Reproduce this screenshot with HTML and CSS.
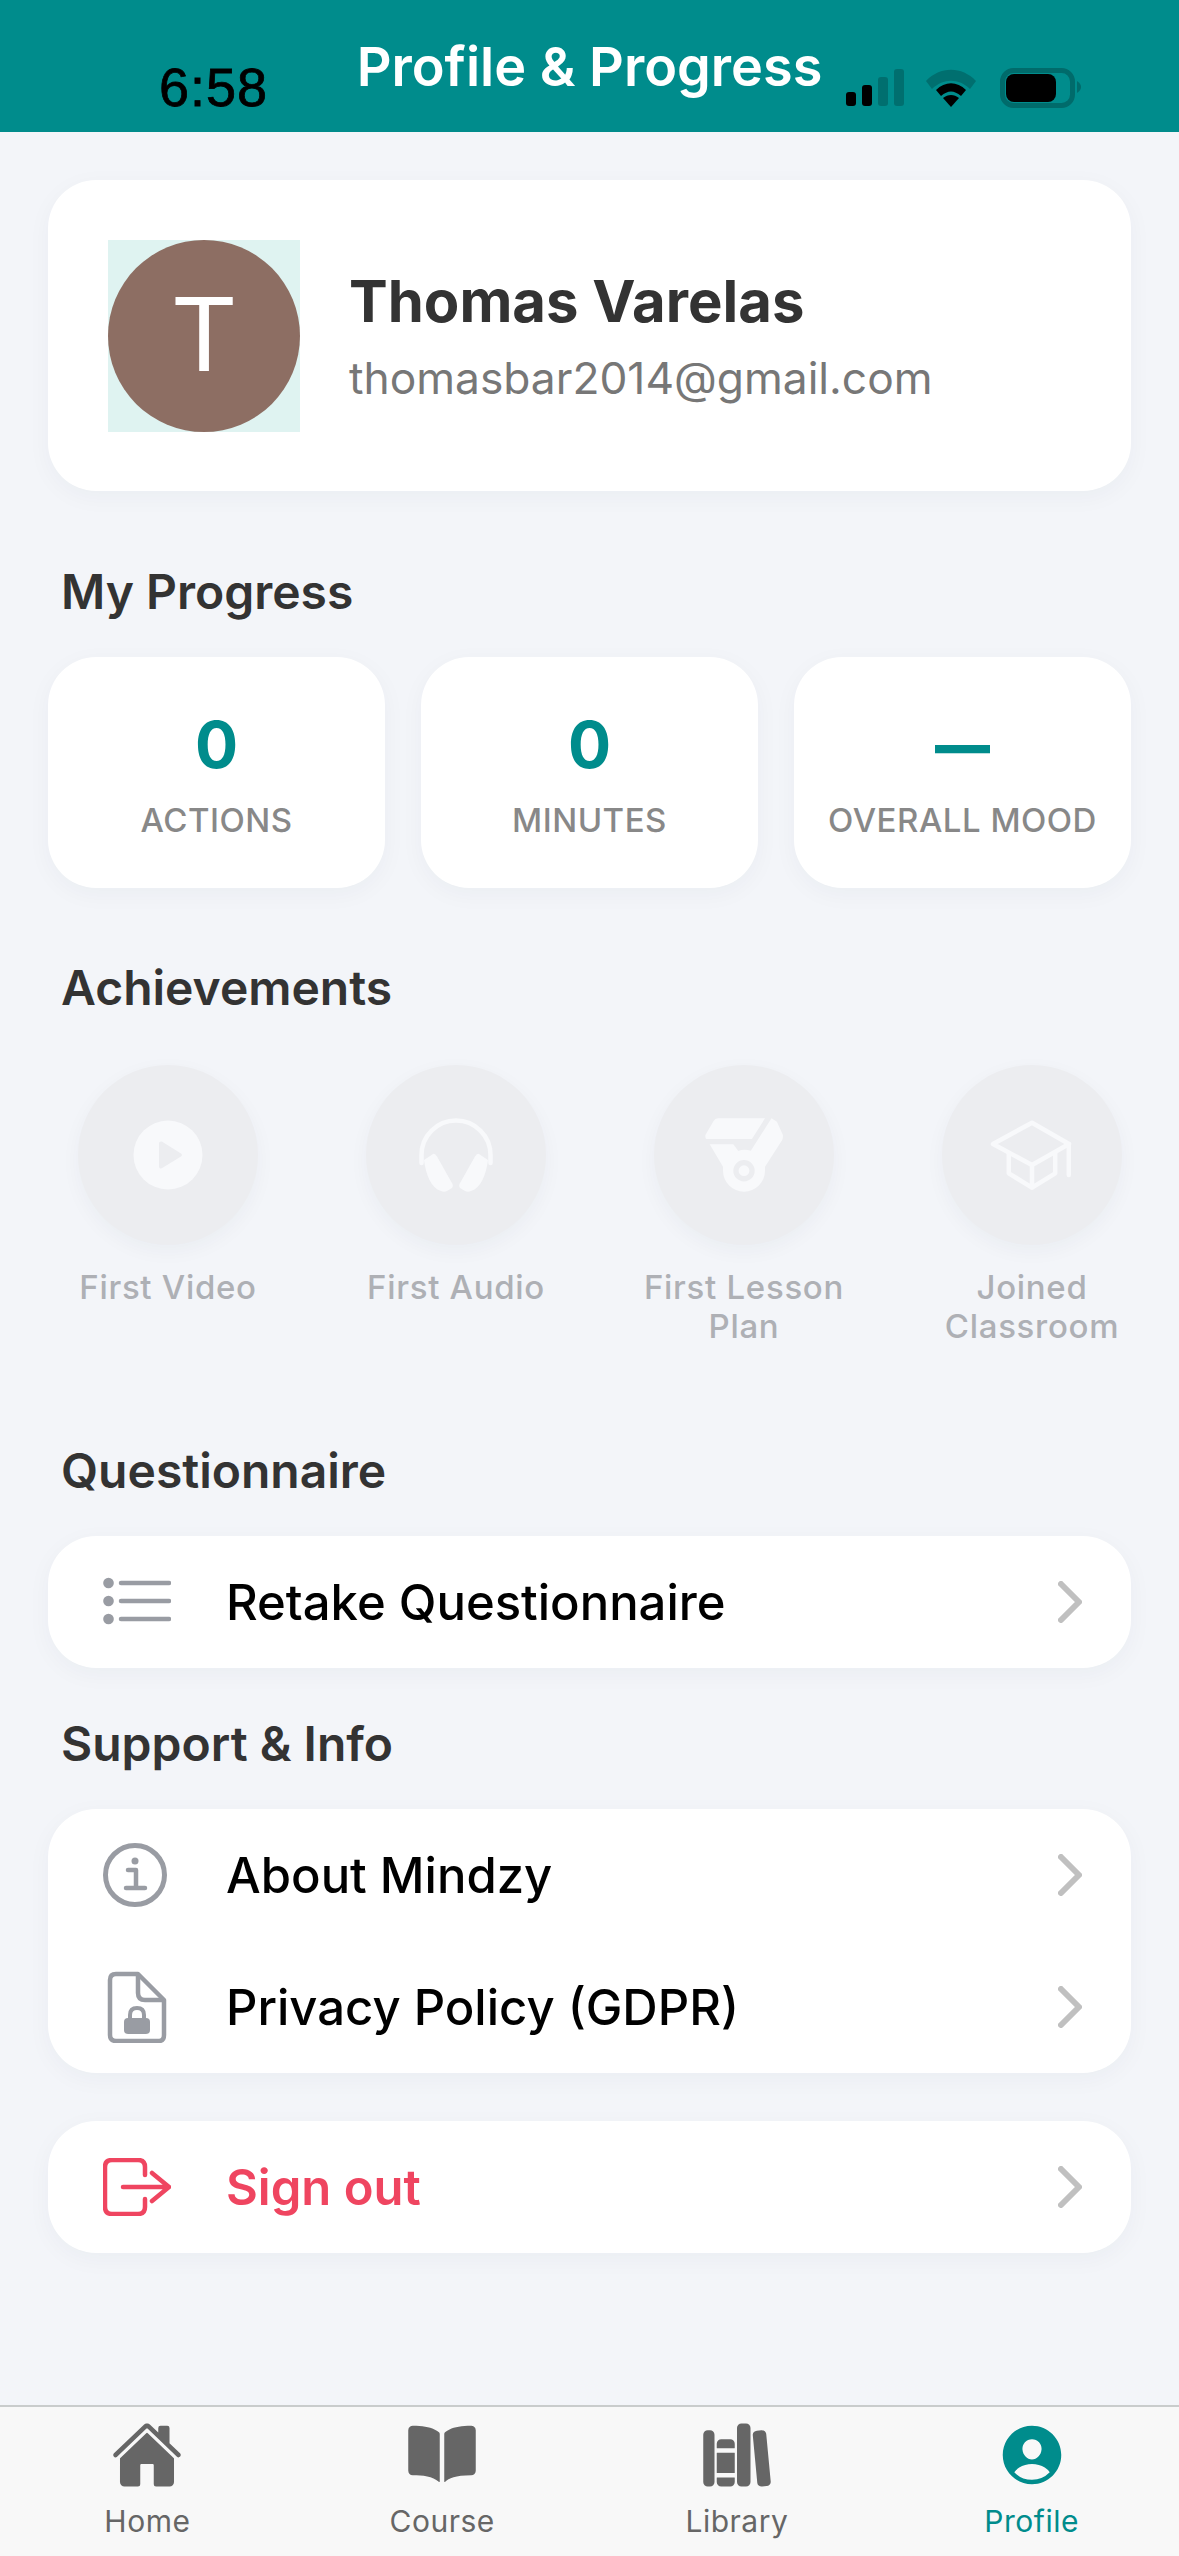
FILE: index.html
```html
<!DOCTYPE html>
<html lang="en">
<head>
    <meta charset="UTF-8">
    <meta name="viewport" content="width=device-width, initial-scale=1.0">
    <title>Profile &amp; Progress</title>
    <link rel="stylesheet" href="styles.css">
</head>
<body>
    <div class="app">
        <header class="top-bar">
            <h1 class="top-title">Profile &amp; Progress</h1>
            <span class="status-time">6:58</span>
            <svg class="status-icons" width="236" height="40" viewBox="846 68 236 40">
                <rect x="846" y="92" width="10" height="14" rx="3"/>
                <rect x="862" y="85" width="10" height="21" rx="3"/>
                <rect x="878" y="77" width="10" height="29" rx="3" fill="#006f6f"/>
                <rect x="894" y="69" width="10" height="37" rx="3" fill="#006f6f"/>
                <path d="M926 81C940 66 962 66 976 81L970 89C959 78 943 78 932 89Z" fill="#006f6f"/>
                <path d="M936 90C945 81 957 81 966 90L961 96C954 90 948 90 941 96Z"/>
                <path d="M943 98C948 94 954 94 959 98L951 107Z"/>
                <rect x="1002.5" y="70.5" width="70" height="35" rx="11" fill="none" stroke="#006b6b" stroke-width="5"/>
                <rect x="1006" y="74" width="50" height="28" rx="8"/>
                <path d="M1077 81C1080 83 1081 85 1081 87C1081 89 1080 91 1077 93Z" fill="#006b6b"/>
            </svg>
        </header>

        <main class="content">
            <section class="card profile-card">
                <div class="avatar-box"><div class="avatar">T</div></div>
                <div class="profile-info">
                    <div class="profile-name">Thomas Varelas</div>
                    <div class="profile-email">thomasbar2014@gmail.com</div>
                </div>
            </section>

            <h2 class="section-title progress-title">My Progress</h2>
            <div class="stats">
                <div class="card stat">
                    <div class="stat-value">0</div>
                    <div class="stat-label">Actions</div>
                </div>
                <div class="card stat">
                    <div class="stat-value">0</div>
                    <div class="stat-label">Minutes</div>
                </div>
                <div class="card stat">
                    <div class="stat-value stat-dash">—</div>
                    <div class="stat-label">Overall Mood</div>
                </div>
            </div>

            <h2 class="section-title achievements-title">Achievements</h2>
            <div class="badges">
                <div class="badge">
                    <div class="badge-circle">
                        <svg width="84" height="84" viewBox="0 0 84 84">
                            <path fill-rule="evenodd" d="M42 7.5a34.5 34.5 0 1 0 0 69a34.5 34.5 0 0 0 0-69zM33 30.500c0-1.800 1.800-2.600 3.200-1.700l18.800 11.800c1.300.8 1.300 2.200 0 3L36.200 55.100c-1.400.9-3.200.1-3.200-1.700z"/>
                        </svg>
                    </div>
                    <div class="badge-label">First Video</div>
                </div>
                <div class="badge">
                    <div class="badge-circle">
                        <svg width="84" height="84" viewBox="0 0 84 84">
                            <path class="line" d="M7.500 50V42a34.500 34.500 0 0 1 69 0V50"/>
                            <path d="M10 47L19 41Q21 40 23 43.500L38.500 71Q39.500 73 38 75L33 78Q30 79.500 27 78C17 75 12 62 10 47Z"/>
                            <path d="M74 47L65 41Q63 40 61 43.500L45.500 71Q44.500 73 46 75L51 78Q54 79.500 57 78C67 75 72 62 74 47Z"/>
                        </svg>
                    </div>
                    <div class="badge-label">First Audio</div>
                </div>
                <div class="badge">
                    <div class="badge-circle">
                        <svg width="84" height="84" viewBox="0 0 84 84">
                            <path d="M15.900 5.300H63L49.900 26H5.200Q3 26 3.400 22L11.600 8Q13 5.300 15.900 5.300Z"/>
                            <path fill-rule="evenodd" d="M7.700 31.300H31.300L36.300 38Q42 35.500 48.800 37.700L69.500 5.300L74.900 8.700L80.900 22Q81.200 25 80.200 27L63 53.700V57.700A21 21 0 0 1 21 57.700V53.700ZM42 47A10.700 10.700 0 1 0 42 68.400A10.700 10.700 0 0 0 42 47ZM42 52.300A5.400 5.400 0 1 1 42 63.100A5.400 5.400 0 0 1 42 52.300Z"/>
                        </svg>
                    </div>
                    <div class="badge-label">First Lesson Plan</div>
                </div>
                <div class="badge">
                    <div class="badge-circle">
                        <svg width="84" height="84" viewBox="0 0 84 84">
                            <path class="line" d="M42 9.700L79 31L42 52L3 31Z"/>
                            <path class="line" d="M18.800 40V60.300L42 74.700L65.200 60.300V40M42 52V74.700M78.800 31V62"/>
                        </svg>
                    </div>
                    <div class="badge-label">Joined Classroom</div>
                </div>
            </div>

            <h2 class="section-title questionnaire-title">Questionnaire</h2>
            <div class="card menu">
                <div class="menu-row">
                    <svg class="menu-icon" width="68" height="68" viewBox="0 0 68 68" fill="none" stroke="#999ca3" stroke-width="4.500" stroke-linecap="round">
                        <path d="M18 15H66M18 33H66M18 51H66"/>
                        <circle cx="5.500" cy="15" r="5.300" fill="#999ca3" stroke="none"/>
                        <circle cx="5.500" cy="33" r="5.300" fill="#999ca3" stroke="none"/>
                        <circle cx="5.500" cy="51" r="5.300" fill="#999ca3" stroke="none"/>
                    </svg>
                    <span class="menu-text">Retake Questionnaire</span>
                    <svg class="chevron" width="24" height="42" viewBox="0 0 24 42"><path d="M3 3L21 21L3 39"/></svg>
                </div>
            </div>

            <h2 class="section-title support-title">Support &amp; Info</h2>
            <div class="card menu">
                <div class="menu-row">
                    <svg class="menu-icon" width="68" height="68" viewBox="0 0 68 68" fill="none" stroke="#999ca3" stroke-width="5">
                        <circle cx="32" cy="34" r="29.500"/>
                        <circle cx="32" cy="20" r="3.500" fill="#999ca3" stroke="none"/>
                        <path d="M25 29H33V46M23 47H42" stroke-linecap="round" stroke-linejoin="round" stroke-width="4.500"/>
                    </svg>
                    <span class="menu-text">About Mindzy</span>
                    <svg class="chevron" width="24" height="42" viewBox="0 0 24 42"><path d="M3 3L21 21L3 39"/></svg>
                </div>
                <div class="menu-row">
                    <svg class="menu-icon" width="68" height="72" viewBox="0 0 68 72" fill="none" stroke="#999ca3" stroke-width="4.500" stroke-linejoin="round">
                        <path d="M35 3H13Q7 3 7 9V64Q7 70 13 70H56Q61 70 61 64V29Z"/>
                        <path d="M35 3V22Q35 29 42 29H61"/>
                        <rect x="21" y="47" width="26" height="16" rx="4" fill="#999ca3" stroke="none"/>
                        <path d="M27 48V44Q27 37 34 37Q41 37 41 44V48" stroke-width="4"/>
                    </svg>
                    <span class="menu-text">Privacy Policy (GDPR)</span>
                    <svg class="chevron" width="24" height="42" viewBox="0 0 24 42"><path d="M3 3L21 21L3 39"/></svg>
                </div>
            </div>

            <div class="card menu signout">
                <div class="menu-row">
                    <svg class="menu-icon" width="68" height="58" viewBox="0 0 68 58" fill="none" stroke="#ef4560" stroke-width="4.500" stroke-linecap="round" stroke-linejoin="round">
                        <path d="M42 17V9Q42 2 35 2H9Q2 2 2 9V49Q2 56 9 56H35Q42 56 42 49V41"/>
                        <path d="M20 29H65M49 15L66 29L49 43"/>
                    </svg>
                    <span class="menu-text">Sign out</span>
                    <svg class="chevron" width="24" height="42" viewBox="0 0 24 42"><path d="M3 3L21 21L3 39"/></svg>
                </div>
            </div>
        </main>

        <nav class="tabs">
            <div class="tab">
                <svg width="72" height="72" viewBox="0 0 512 512"><path d="M261.560 101.280a8 8 0 00-11.060 0L66.400 277.150a8 8 0 00-2.470 5.790L63.900 448a32 32 0 0032 32H192a16 16 0 0016-16V328a8 8 0 018-8h80a8 8 0 018 8v136a16 16 0 0016 16h96.060a32 32 0 0032-32V282.940a8 8 0 00-2.470-5.790z"/><path d="M490.910 244.150l-74.800-71.560V64a16 16 0 00-16-16h-48a16 16 0 00-16 16v32l-57.920-55.380C272.770 35.140 264.710 32 256 32c-8.680 0-16.720 3.140-22.140 8.630l-212.700 203.500c-6.220 6-7 15.870-1.340 22.370A16 16 0 0043 267.560L250.500 69.280a8 8 0 0111.060 0l207.520 198.280a16 16 0 0022.590-.44c6.140-6.360 5.630-16.860-.76-22.970z"/></svg>
                <span>Home</span>
            </div>
            <div class="tab">
                <svg width="72" height="72" viewBox="0 0 512 512"><path d="M202.240 74C166.110 56.750 115.610 48.440 48 48a31.360 31.360 0 00-17.920 5.330A32 32 0 0016 79.900V366c0 19.340 13.760 33.930 32 33.930 71.070 0 142.360 6.640 185.060 47a4.110 4.110 0 006.940-3V106.820a15.890 15.890 0 00-5.460-12A143 143 0 00202.240 74zM481.920 53.300A31.330 31.330 0 00464 48c-67.610.44-118.110 8.690-154.240 26a143.310 143.310 0 00-32.310 20.780 15.930 15.930 0 00-5.450 12v337.130a3.930 3.930 0 006.680 2.810c25.670-25.500 70.720-46.820 185.360-46.810a32 32 0 0032-32v-288a32 32 0 00-14.120-26.610z"/></svg>
                <span>Course</span>
            </div>
            <div class="tab">
                <svg width="72" height="72" viewBox="0 0 512 512"><path d="M64 480H48a32 32 0 01-32-32V112a32 32 0 0132-32h16a32 32 0 0132 32v336a32 32 0 01-32 32zM240 176a32 32 0 00-32-32h-64a32 32 0 00-32 32v28a4 4 0 004 4h120a4 4 0 004-4zM112 448a32 32 0 0032 32h64a32 32 0 0032-32v-30a2 2 0 00-2-2H114a2 2 0 00-2 2z"/><rect x="112" y="240" width="128" height="144" rx="2" ry="2"/><path d="M320 480h-32a32 32 0 01-32-32V64a32 32 0 0132-32h32a32 32 0 0132 32v384a32 32 0 01-32 32zM495.890 445.450l-32.230-340c-1.480-15.650-16.940-27-34.530-25.310l-31.850 3c-17.590 1.670-30.650 15.710-29.170 31.360l32.230 340c1.480 15.650 16.940 27 34.530 25.310l31.850-3c17.590-1.670 30.650-15.710 29.170-31.360z"/></svg>
                <span>Library</span>
            </div>
            <div class="tab active">
                <svg width="72" height="72" viewBox="0 0 512 512"><path d="M256 48C141.310 48 48 141.310 48 256s93.310 208 208 208 208-93.310 208-208S370.690 48 256 48zm-50.220 116.820C218.450 151.390 236.280 144 256 144s37.390 7.440 50.110 20.940c12.890 13.680 19.160 32.060 17.680 51.820C320.830 256 290.430 288 256 288s-64.890-32-67.790-71.250c-1.470-19.920 4.790-38.360 17.570-51.930zM256 432a175.490 175.490 0 01-126-53.220 122.910 122.910 0 0135.140-33.440C190.630 329 222.890 320 256 320s65.370 9 90.830 25.340A122.870 122.870 0 01382 378.780 175.450 175.450 0 01256 432z"/></svg>
                <span>Profile</span>
            </div>
        </nav>
    </div>
</body>
</html>
```

FILE: styles.css
```css
* {
    box-sizing: border-box;
}
body {
    margin: 0;
    background: #f3f5f9;
    font-family: Inter, "Noto Sans", sans-serif;
}
.app {
    display: flex;
    flex-direction: column;
    height: 2556px;
    overflow: hidden;
}

/* Top bar */
.top-bar {
    position: relative;
    height: 132px;
    flex: none;
    padding-top: 33px;
    background: #008c8c;
}
.top-title {
    margin: 0;
    color: #fff;
    font-size: 54px;
    line-height: 68px;
    font-weight: 600;
    text-align: center;
}
.status-time {
    position: absolute;
    left: 159px;
    top: 57px;
    color: #000;
    font-family: "Liberation Sans", sans-serif;
    font-size: 54px;
    line-height: 60px;
    letter-spacing: 1px;
    -webkit-text-stroke: 0.8px #000;
}
.status-icons {
    position: absolute;
    left: 846px;
    top: 68px;
}

/* Cards */
.content {
    flex: 1;
    padding: 48px 48px 0 48px;
}
.card {
    background: #fff;
    border-radius: 48px;
    box-shadow: 0 6px 24px rgba(30, 40, 70, 0.04);
}
.profile-card {
    display: flex;
    align-items: center;
    gap: 49px;
    height: 311px;
    padding-left: 60px;
}
.profile-info {
    padding-top: 3px;
}
.avatar-box {
    width: 192px;
    height: 192px;
    background: #dff3f1;
}
.avatar {
    display: flex;
    align-items: center;
    justify-content: center;
    width: 192px;
    height: 192px;
    border-radius: 50%;
    background: #8d6e63;
    color: #fff;
    font-family: Roboto, sans-serif;
    font-size: 104px;
}
.profile-name {
    margin-top: -2px;
    color: #333;
    font-size: 58px;
    line-height: 70px;
    font-weight: 700;
}
.profile-email {
    margin-top: 14px;
    color: #777;
    font-size: 44.300px;
    line-height: 56px;
}

/* Section headings */
.section-title {
    margin: 0;
    padding-left: 13px;
    color: #333;
    font-size: 48px;
    line-height: 56px;
    font-weight: 600;
}
.progress-title {
    margin-top: 73px;
}
.achievements-title {
    margin-top: 72px;
}
.questionnaire-title {
    margin-top: 95px;
}
.support-title {
    margin-top: 48px;
}

/* Stats */
.stats {
    display: grid;
    grid-template-columns: repeat(3, 1fr);
    gap: 36px;
    margin-top: 37px;
}
.stat {
    height: 231px;
    padding-top: 48px;
    text-align: center;
}
.stat-value {
    color: #008c8c;
    font-size: 64px;
    line-height: 80px;
    font-weight: 700;
}
.stat-dash {
    font-size: 55px;
    font-weight: 900;
}
.stat-label {
    margin-top: 15px;
    color: #888;
    font-size: 33px;
    line-height: 40px;
    font-weight: 500;
    letter-spacing: 0.5px;
    text-transform: uppercase;
}

/* Achievements */
.badges {
    display: grid;
    grid-template-columns: repeat(4, 288px);
    margin: 49px -46px 0 -24px;
}
.badge {
    text-align: center;
}
.badge-circle {
    display: flex;
    align-items: center;
    justify-content: center;
    width: 180px;
    height: 180px;
    margin: 0 auto;
    border-radius: 50%;
    background: #ecedf0;
    box-shadow: 0 6px 20px rgba(30, 40, 70, 0.04);
}
.badge-circle svg {
    fill: #f8f9fb;
}
.badge-circle .line {
    fill: none;
    stroke: #f8f9fb;
    stroke-width: 4.500;
    stroke-linejoin: round;
    stroke-linecap: round;
}
.badge-label {
    width: 240px;
    height: 80px;
    margin: 23px auto 0;
    color: #aeb0b5;
    font-size: 33px;
    line-height: 39px;
    font-weight: 500;
    letter-spacing: 0.7px;
}

/* Menu lists */
.menu {
    margin-top: 37px;
}
.signout {
    margin-top: 48px;
}
.menu-row {
    display: flex;
    align-items: center;
    height: 132px;
    padding: 0 49px 0 55px;
}
.menu-icon {
    flex: none;
    margin-right: 55px;
}
.menu-text {
    flex: 1;
    color: #000;
    font-size: 49px;
    font-weight: 500;
}
.signout .menu-text {
    color: #ef4560;
    font-weight: 600;
}
.chevron {
    flex: none;
    fill: none;
    stroke: #c0c0c0;
    stroke-width: 6;
    stroke-linecap: round;
    stroke-linejoin: round;
}

/* Bottom tabs */
.tabs {
    display: grid;
    grid-template-columns: repeat(4, 1fr);
    flex: none;
    height: 151px;
    padding: 12px 0 0;
    background: #f8f8f8;
    border-top: 2px solid #c9cccc;
}
.tab {
    display: flex;
    flex-direction: column;
    align-items: center;
    color: #666;
    fill: #666;
    font-size: 30px;
    line-height: 36px;
    letter-spacing: 0.5px;
}
.tab span {
    margin-top: 12px;
}
.tab.active {
    color: #008c8c;
    fill: #008c8c;
}
```
